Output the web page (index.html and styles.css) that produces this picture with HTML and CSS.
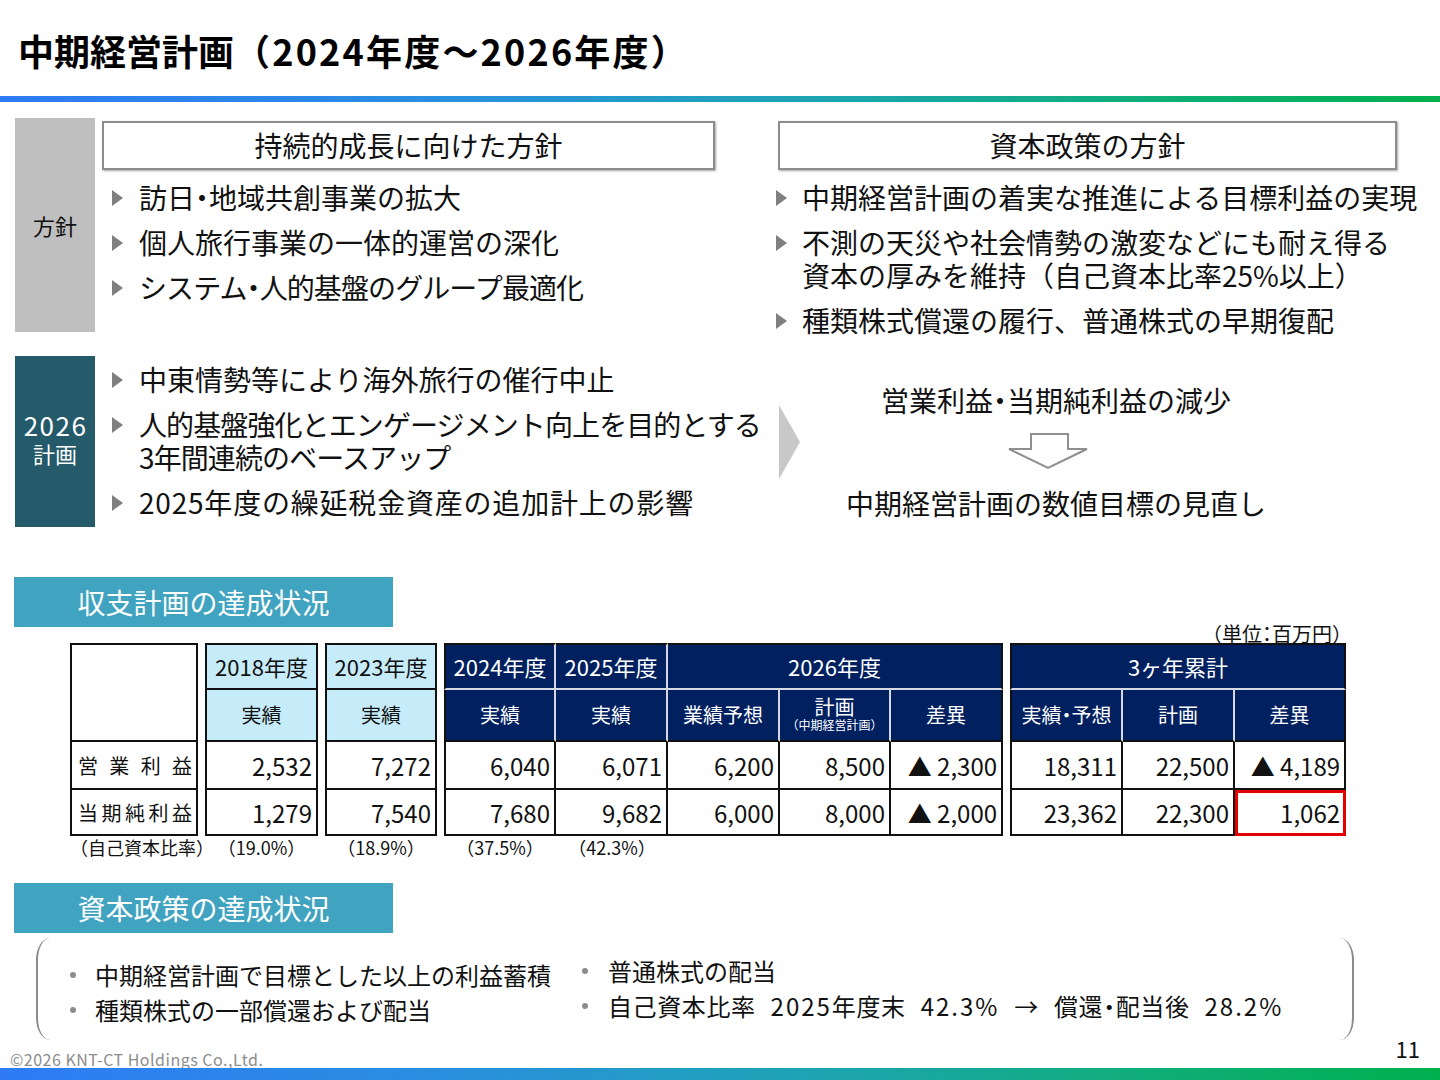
FILE: index.html
```html
<!DOCTYPE html>
<html lang="ja">
<head>
<meta charset="utf-8">
<title>中期経営計画</title>
<link rel="stylesheet" href="styles.css">
</head>
<body>
<div class="page">
  <header class="hdr"><h1 class="title">中期経営計画<span class="title-yr">（2024年度～2026年度）</span></h1></header>
  <div class="grad top-bar"></div>

  <section class="row row-a">
    <div class="side side-gray">方針</div>
    <div class="col-left">
      <div class="boxhead">持続的成長に向けた方針</div>
      <ul class="tri-list">
        <li><span class="tri"></span><span>訪日<span class="pd">・</span>地域共創事業の拡大</span></li>
        <li><span class="tri"></span><span>個人旅行事業の一体的運営の深化</span></li>
        <li><span class="tri"></span><span class="tight">システム<span class="pd">・</span>人的基盤のグループ最適化</span></li>
      </ul>
    </div>
    <div class="col-right">
      <div class="boxhead boxhead-r">資本政策の方針</div>
      <ul class="tri-list tri-list-r">
        <li><span class="tri"></span><span>中期経営計画の着実な推進による目標利益の実現</span></li>
        <li><span class="tri"></span><span>不測の天災や社会情勢の激変などにも耐え得る<br>資本の厚みを維持（自己資本比率25%以上）</span></li>
        <li><span class="tri"></span><span>種類株式償還の履行、普通株式の早期復配</span></li>
      </ul>
    </div>
  </section>

  <section class="row row-b">
    <div class="side side-dark"><span class="yr">2026</span><span class="kk">計画</span></div>
    <div class="col-mid">
      <ul class="tri-list">
        <li><span class="tri"></span><span>中東情勢等により海外旅行の催行中止</span></li>
        <li><span class="tri"></span><span class="tight">人的基盤強化とエンゲージメント向上を目的とする<br>3年間連続のベースアップ</span></li>
        <li><span class="tri"></span><span class="wide">2025年度の繰延税金資産の追加計上の影響</span></li>
      </ul>
    </div>
    <svg class="chev" width="21" height="74" viewBox="0 0 21 74"><polygon points="0,0 21,37 0,74" fill="#c8c8c8"/></svg>
    <div class="result">
      <div class="t1">営業利益<span class="pd">・</span>当期純利益の減少</div>
      <svg class="down" width="82" height="38" viewBox="0 0 82 38"><polygon points="24,2 61,2 61,17 80,17 41,36 2,17 24,17" fill="#fff" stroke="#8f8f8f" stroke-width="2" stroke-linejoin="miter"/></svg>
      <div class="t2">中期経営計画の数値目標の見直し</div>
    </div>
  </section>

  <div class="sec-head sec1">収支計画の達成状況</div>
  <div class="unit">（単位<span class="pd">：</span>百万円）</div>

  <table class="tbl">
    <colgroup>
      <col style="width:128px"><col style="width:7px"><col style="width:113px"><col style="width:7px"><col style="width:112px"><col style="width:7px">
      <col style="width:112px"><col style="width:112px"><col style="width:112px"><col style="width:111px"><col style="width:112px"><col style="width:7px">
      <col style="width:113px"><col style="width:112px"><col style="width:111px">
    </colgroup>
    <tr class="r1">
      <td class="g gl gt wh" rowspan="2"></td><td class="sp"></td>
      <td class="g gl gt lb hd">2018年度</td><td class="sp"></td>
      <td class="g gl gt lb hd">2023年度</td><td class="sp"></td>
      <td class="g gl gt nv hd">2024年度</td>
      <td class="g gt nv hd">2025年度</td>
      <td class="g gt nv hd end" colspan="3">2026年度</td><td class="sp"></td>
      <td class="g gl gt nv hd end" colspan="3">3ヶ年累計</td>
    </tr>
    <tr class="r2">
      <td class="sp"></td>
      <td class="g gl lb sub">実績</td><td class="sp"></td>
      <td class="g gl lb sub">実績</td><td class="sp"></td>
      <td class="g gl nv nv2 sub">実績</td>
      <td class="g nv nv2 sub">実績</td>
      <td class="g nv nv2 sub">業績予想</td>
      <td class="g nv nv2 sub"><span class="plan">計画</span><span class="plan-s">（中期経営計画）</span></td>
      <td class="g nv nv2 sub end">差異</td><td class="sp"></td>
      <td class="g gl nv nv2 sub">実績<span class="pd">・</span>予想</td>
      <td class="g nv nv2 sub">計画</td>
      <td class="g nv nv2 sub end">差異</td>
    </tr>
    <tr class="r3">
      <td class="g gl lab"><span class="jst">営業利益</span></td><td class="sp"></td>
      <td class="g gl num">2,532</td><td class="sp"></td>
      <td class="g gl num">7,272</td><td class="sp"></td>
      <td class="g gl num">6,040</td>
      <td class="g num">6,071</td>
      <td class="g num">6,200</td>
      <td class="g num">8,500</td>
      <td class="g num">▲ 2,300</td><td class="sp"></td>
      <td class="g gl num">18,311</td>
      <td class="g num">22,500</td>
      <td class="g num">▲ 4,189</td>
    </tr>
    <tr class="r4">
      <td class="g gl lab"><span class="jst">当期純利益</span></td><td class="sp"></td>
      <td class="g gl num">1,279</td><td class="sp"></td>
      <td class="g gl num">7,540</td><td class="sp"></td>
      <td class="g gl num">7,680</td>
      <td class="g num">9,682</td>
      <td class="g num">6,000</td>
      <td class="g num">8,000</td>
      <td class="g num">▲ 2,000</td><td class="sp"></td>
      <td class="g gl num">23,362</td>
      <td class="g num">22,300</td>
      <td class="g num hl">1,062</td>
    </tr>
    <tr class="r5">
      <td class="ft">（自己資本比率）</td><td></td>
      <td class="ft">（19.0%）</td><td></td>
      <td class="ft">（18.9%）</td><td></td>
      <td class="ft">（37.5%）</td>
      <td class="ft">（42.3%）</td>
      <td></td><td></td><td></td><td></td><td></td><td></td><td></td>
    </tr>
  </table>

  <div class="sec-head sec2">資本政策の達成状況</div>

  <div class="brk">
    <ul class="dots brk-l">
      <li><span class="dot"></span>中期経営計画で目標とした以上の利益蓄積</li>
      <li><span class="dot"></span>種類株式の一部償還および配当</li>
    </ul>
    <ul class="dots brk-r">
      <li><span class="dot"></span>普通株式の配当</li>
      <li><span class="dot"></span><span class="ratio">自己資本比率 <span class="dg">2025</span>年度末 <span class="dg">42.3%</span> → 償還<span class="pd">・</span>配当後 <span class="dg">28.2%</span></span></li>
    </ul>
  </div>

  <footer class="foot">
    <span class="copy">©2026 KNT-CT Holdings Co.,Ltd.</span>
    <span class="pg">11</span>
  </footer>
  <div class="grad bottom-bar"></div>
</div>
</body>
</html>
```

FILE: styles.css
```css
* { box-sizing: border-box; margin: 0; padding: 0; }
html, body { width: 1440px; height: 1080px; background: #fff; }
body {
  font-family: "Noto Sans CJK JP", "Noto Sans", sans-serif;
  color: #111;
  overflow: hidden;
}
.page { width: 1440px; height: 1080px; display: flex; flex-direction: column; }

.pd { font-feature-settings: "palt"; }

.hdr { height: 96px; padding: 28px 0 0 18px; flex: none; }
.title { font-size: 36px; line-height: 44px; font-weight: 700; color: #000; }
.title-yr { letter-spacing: 2.2px; }

.grad {
  background: linear-gradient(90deg, #2e7bf5 0%, #2a8ee0 30%, #1ea3b6 55%, #10ad7c 78%, #00b04e 100%);
}
.top-bar { height: 6px; flex: none; }

.row { display: flex; padding-left: 15px; flex: none; }
.row-a { margin-top: 16px; height: 214px; }
.row-b { margin-top: 24px; height: 171px; }

.side {
  width: 80px; flex: none;
  display: flex; flex-direction: column; align-items: center; justify-content: center;
}
.side-gray { background: #bfbfbf; font-size: 22px; color: #111; }
.side-dark { background: #245a6a; color: #fff; padding-bottom: 8px; }
.side-dark .yr { font-size: 26px; line-height: 30px; letter-spacing: 1.5px; padding-left: 1px; }
.side-dark .kk { font-size: 22px; line-height: 26px; }

.col-left { margin-left: 7px; width: 613px; flex: none; }
.col-right { margin-left: 61px; width: 640px; flex: none; }
.col-mid { margin-left: 7px; width: 663px; flex: none; }

.boxhead {
  margin-top: 3px; height: 49px;
  border: 2px solid #8c8c8c;
  box-shadow: 1px 1px 2px rgba(0, 0, 0, 0.35);
  text-align: center; font-size: 28px; line-height: 44px;
}
.boxhead-r { margin-left: 2px; width: 619px; }

.tri-list { list-style: none; margin-top: 11px; padding-left: 10px; }
.col-mid .tri-list { margin-top: 7px; }
.tri-list li { display: flex; font-size: 28px; line-height: 33px; white-space: nowrap; }
.tri-list li + li { margin-top: 12px; }
.tight { letter-spacing: -0.9px; }
.wide { letter-spacing: 0.8px; }
.tri {
  flex: none; width: 0; height: 0;
  border-left: 11px solid #7f7f7f;
  border-top: 8px solid transparent;
  border-bottom: 8px solid transparent;
  margin: 9px 16px 0 0;
}
.tri-list-r { padding-left: 0; }
.tri-list-r .tri { margin-right: 15px; }

.chev { flex: none; margin: 49px 0 0 14px; }
.result {
  width: 512px; flex: none;
  display: flex; flex-direction: column; align-items: center;
  padding-top: 28px; font-size: 28px; line-height: 33px;
}
.down { margin: 15px 16px 0 0; }
.result .t2 { margin-top: 17px; }

.sec-head {
  margin-left: 14px; width: 379px; height: 50px; flex: none;
  background: #40a3c0; color: #fff;
  font-size: 28px; line-height: 50px; text-align: center;
}
.sec1 { margin-top: 50px; }
.sec2 { margin-top: 25px; }

.unit {
  height: 16px; flex: none;
  font-size: 20px; line-height: 14px;
  text-align: right; padding-right: 88px;
}

.tbl {
  margin-left: 70px; width: 1276px; flex: none;
  border-collapse: separate; border-spacing: 0; table-layout: fixed;
}
.tbl td { padding: 0; vertical-align: middle; }
.tbl .r1 { height: 47px; }
.tbl .r2 { height: 52px; }
.tbl .r3 { height: 48px; }
.tbl .r4 { height: 46px; }
.tbl .r5 { height: 22px; }

.g { border-right: 2px solid #111; border-bottom: 2px solid #111; }
.gl { border-left: 2px solid #111; }
.gt { border-top: 2px solid #111; }
.wh { background: #fff; }
.lb { background: #c6ebf9; text-align: center; color: #111; }
.nv { background: #002060; color: #fff; text-align: center; border-right-color: #d6d9e2; border-bottom-color: #d6d9e2; }
.nv.gt { border-top-color: #111; }
.nv.gl { border-left-color: #111; }
.nv.end { border-right-color: #111; }
.nv2 { border-bottom-color: #111; }
.hd { font-size: 22px; line-height: 26px; padding-bottom: 2px !important; }
.sub { font-size: 20px; line-height: 24px; }
.plan { display: block; font-size: 20px; line-height: 20px; }
.plan-s { display: block; font-size: 12px; line-height: 16px; }

.num { font-size: 24px; text-align: right; padding-right: 4px !important; }
.lab { font-size: 20px; padding: 0 4px 0 6px !important; }
.jst { display: block; text-align: justify; text-align-last: justify; }
.hl { outline: 3px solid #e50000; outline-offset: -3px; }

.ft { font-size: 18px; line-height: 22px; text-align: center; white-space: nowrap; }

.brk {
  margin: 5px 0 0 36px; width: 1318px; height: 102px; flex: none;
  border-left: 2px solid #8c8c8c; border-right: 2px solid #8c8c8c;
  border-radius: 14px / 22px;
  display: flex;
}
.dots { list-style: none; }
.dots li { display: flex; align-items: center; font-size: 24px; line-height: 35px; white-space: nowrap; }
.dot { width: 6px; height: 6px; border-radius: 50%; background: #8c8c8c; margin-right: 19px; flex: none; }
.brk-l { width: 544px; padding: 19px 0 0 32px; }
.brk-r { padding-top: 15px; }
.brk-r .dot { margin-right: 20px; }
.ratio { letter-spacing: 0.6px; word-spacing: 9px; }
.dg { letter-spacing: 2px; }

.foot {
  height: 28px; flex: none;
  display: flex; justify-content: space-between; align-items: flex-end;
  padding: 0 20px 0 10px;
}
.copy { font-size: 16px; line-height: 18px; color: #8c8c8c; letter-spacing: 0.5px; }
.pg { font-size: 22px; line-height: 24px; margin-bottom: 8px; }
.bottom-bar { height: 12px; flex: none; }
```
